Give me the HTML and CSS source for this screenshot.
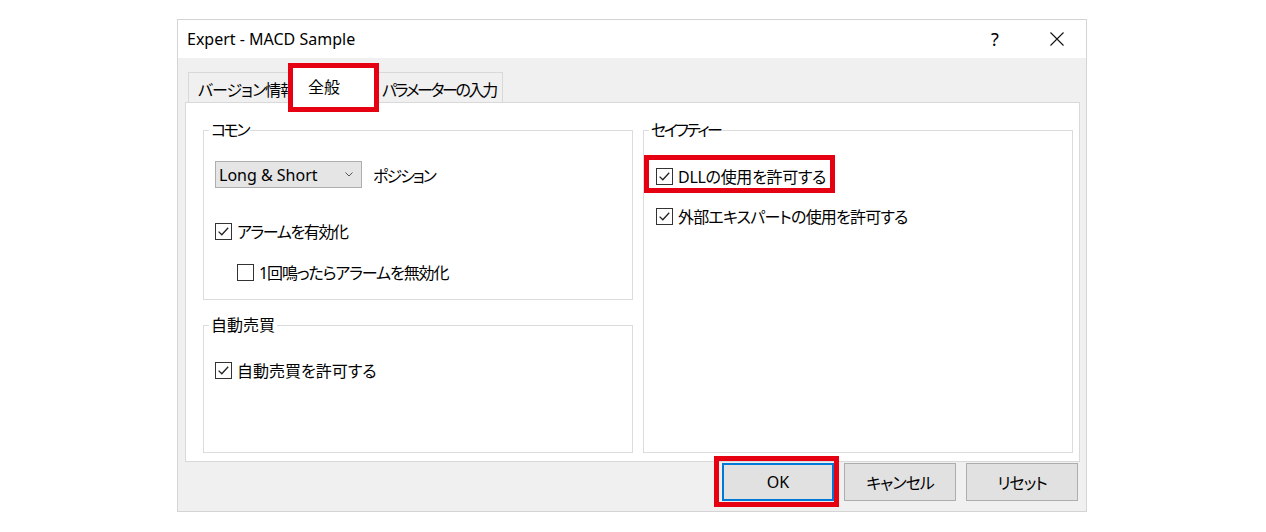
FILE: index.html
```html
<!DOCTYPE html>
<html lang="ja">
<head>
  <meta charset="UTF-8">
  <title>Expert - MACD Sample</title>
  <link rel="stylesheet" href="styles.css">
</head>
<body>
<div class="stage">
  <div class="dialog">
    <div class="titlebar">
      <span class="title">Expert - MACD Sample</span>
      <span class="tbtn">?</span>
      <span class="tbtn">
        <svg width="14" height="14" viewBox="0 0 14 14"><path d="M0.5 0.5L13.5 13.5M13.5 0.5L0.5 13.5" stroke="#111" stroke-width="1.1" fill="none"/></svg>
      </span>
    </div>
    <div class="dlgbody">
      <div class="tabs">
        <div class="tab first">バージョン情報</div>
        <div class="tab active mark">全般</div>
        <div class="tab last">パラメーターの入力</div>
      </div>
      <div class="panel">
        <div class="col">
          <fieldset class="group common">
            <legend class="kana">コモン</legend>
            <div class="content">
              <div class="combo-row">
                <div class="combo">
                  <span>Long &amp; Short</span>
                  <svg width="8" height="5" viewBox="0 0 8 5"><path d="M0.5 0.5L4 4L7.5 0.5" stroke="#555" stroke-width="1" fill="none"/></svg>
                </div>
                <span class="combo-label">ポジション</span>
              </div>
              <label class="check alarm">
                <svg class="box" width="17" height="17" viewBox="0 0 17 17"><rect x="0.5" y="0.5" width="16" height="16" fill="#fff" stroke="#333"/><path d="M3.6 8.6L6.8 11.8L13.2 4.8" stroke="#222" stroke-width="1.3" fill="none"/></svg>
                アラームを有効化
              </label>
              <label class="check sub">
                <svg class="box" width="17" height="17" viewBox="0 0 17 17"><rect x="0.5" y="0.5" width="16" height="16" fill="#fff" stroke="#333"/></svg>
                1回鳴ったらアラームを無効化
              </label>
            </div>
          </fieldset>
          <fieldset class="group trade">
            <legend>自動売買</legend>
            <div class="content">
              <label class="check">
                <svg class="box" width="17" height="17" viewBox="0 0 17 17"><rect x="0.5" y="0.5" width="16" height="16" fill="#fff" stroke="#333"/><path d="M3.6 8.6L6.8 11.8L13.2 4.8" stroke="#222" stroke-width="1.3" fill="none"/></svg>
                自動売買を許可する
              </label>
            </div>
          </fieldset>
        </div>
        <div class="col">
          <fieldset class="group safety">
            <legend class="kana">セイフティー</legend>
            <div class="content">
              <label class="check dll mark">
                <svg class="box" width="17" height="17" viewBox="0 0 17 17"><rect x="0.5" y="0.5" width="16" height="16" fill="#fff" stroke="#333"/><path d="M3.6 8.6L6.8 11.8L13.2 4.8" stroke="#222" stroke-width="1.3" fill="none"/></svg>
                DLLの使用を許可する
              </label>
              <label class="check ext">
                <svg class="box" width="17" height="17" viewBox="0 0 17 17"><rect x="0.5" y="0.5" width="16" height="16" fill="#fff" stroke="#333"/><path d="M3.6 8.6L6.8 11.8L13.2 4.8" stroke="#222" stroke-width="1.3" fill="none"/></svg>
                外部エキスパートの使用を許可する
              </label>
            </div>
          </fieldset>
        </div>
      </div>
      <div class="buttons">
        <button class="btn default mark">OK</button>
        <button class="btn kana-btn">キャンセル</button>
        <button class="btn kana-btn">リセット</button>
      </div>
    </div>
  </div>
</div>
</body>
</html>
```

FILE: styles.css
```css
body {
  margin: 0;
  background: #fff;
  color: #000;
  font-family: "Noto Sans", "Noto Sans CJK JP", sans-serif;
  font-size: 16px;
  font-feature-settings: "palt";
}

.stage {
  padding: 19px 0 0 177px;
}

.dialog {
  width: 910px;
  height: 493px;
  box-sizing: border-box;
  border: 1px solid #d4d4d4;
  background: #f0f0f0;
  display: flex;
  flex-direction: column;
}

/* title bar */
.titlebar {
  height: 38px;
  background: #fff;
  display: flex;
  align-items: center;
  padding: 0 9px 0 9px;
  gap: 22px;
}

.title {
  flex: 1;
}

.tbtn {
  width: 40px;
  display: flex;
  justify-content: center;
  align-items: center;
  font-size: 18px;
}

/* body */
.dlgbody {
  flex: 1;
  padding: 9px 6px 0 7px;
  display: flex;
  flex-direction: column;
}

.tabs {
  height: 35px;
  display: flex;
  align-items: flex-end;
  padding-left: 3px;
}

.tab {
  height: 30px;
  box-sizing: border-box;
  border: 1px solid #d9d9d9;
  border-bottom: none;
  background: #f0f0f0;
  display: flex;
  align-items: center;
  padding-top: 3px;
  white-space: nowrap;
  letter-spacing: -2px;
}

.tab.first {
  width: 106px;
  padding-left: 9px;
  letter-spacing: -1px;
}

.tab.active {
  width: 83px;
  height: 36px;
  margin: 0 0 -1px -2px;
  padding: 0 0 0 15px;
  background: #fff;
  letter-spacing: 0;
  position: relative;
  z-index: 1;
}

.tab.last {
  padding: 3px 6px 0 6px;
  letter-spacing: -2.4px;
}

/* red highlight frames */
.mark {
  position: relative;
}

.mark::after {
  content: "";
  position: absolute;
  border: 5px solid #e50012;
  pointer-events: none;
}

.tab.mark::after {
  left: -5px;
  right: -5px;
  top: -5px;
  bottom: -9px;
}

.check.mark::after {
  left: -12px;
  right: -9px;
  top: -11px;
  bottom: -7px;
}

.btn.mark::after {
  left: -9px;
  right: -6px;
  top: -8px;
  bottom: -7px;
}

.panel {
  height: 360px;
  box-sizing: border-box;
  background: #fff;
  border: 1px solid #d9d9d9;
  padding: 17px 6px 8px 17px;
  display: flex;
  gap: 10px;
}

.col {
  flex: 1;
  display: flex;
  flex-direction: column;
  gap: 15px;
}

.group {
  margin: 0;
  min-width: 0;
  box-sizing: border-box;
  border: 1px solid #dcdcdc;
  padding: 0 6px 0 5px;
}

.group legend {
  padding: 0 2px;
  line-height: 20px;
}

.group legend.kana {
  letter-spacing: -2.5px;
}

.common {
  height: 180px;
}

.trade,
.safety {
  flex: 1;
}

.content {
  padding-left: 6px;
  display: flex;
  flex-direction: column;
  align-items: flex-start;
}

.safety .content {
  padding-left: 7px;
}

.combo-row {
  margin-top: 21px;
  display: flex;
  align-items: center;
}

.combo {
  width: 147px;
  height: 27px;
  box-sizing: border-box;
  border: 1px solid #adadad;
  background: #e5e5e5;
  display: flex;
  align-items: center;
  padding: 0 8px 0 3px;
}

.combo span {
  flex: 1;
}

.combo-label {
  margin-left: 11px;
  letter-spacing: -2px;
}

.check {
  height: 20px;
  display: flex;
  align-items: center;
  gap: 5px;
  white-space: nowrap;
}

.check .box {
  flex: none;
}

.check.alarm {
  margin-top: 33px;
  letter-spacing: -1.4px;
}

.check.sub {
  margin: 21px 0 0 22px;
  letter-spacing: -1.1px;
}

.trade .check {
  margin-top: 25px;
}

.check.dll {
  margin-top: 26px;
  letter-spacing: -0.3px;
}

.check.ext {
  margin-top: 20px;
  letter-spacing: -0.8px;
}

/* buttons */
.buttons {
  margin: 1px 2px 0 0;
  display: flex;
  justify-content: flex-end;
  gap: 10px;
}

.btn {
  width: 112px;
  height: 38px;
  box-sizing: border-box;
  border: 1px solid #adadad;
  background: #e1e1e1;
  font: inherit;
  color: #000;
  padding: 0;
}

.btn.kana-btn {
  letter-spacing: -1px;
}

.btn.default {
  border-color: #0078d7;
  box-shadow: inset 0 0 0 1px #0078d7;
}
```
